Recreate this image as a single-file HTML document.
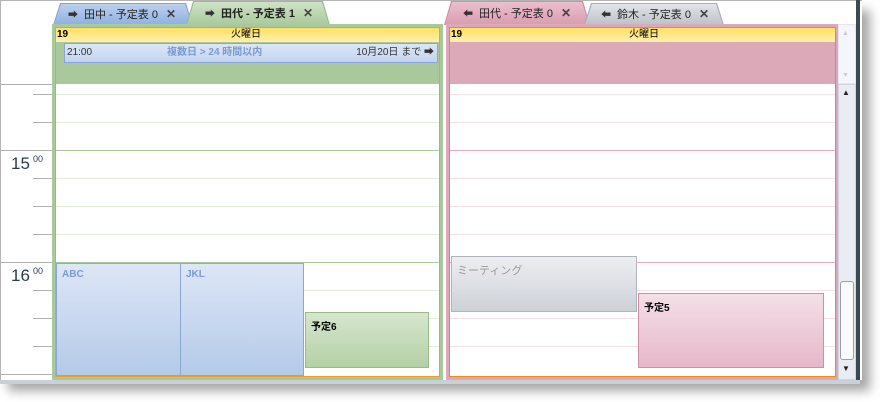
<!DOCTYPE html>
<html><head><meta charset="utf-8"><style>
*{box-sizing:border-box;margin:0;padding:0}
body{width:880px;height:402px;background:#fff;position:relative;overflow:hidden;font-family:"Liberation Sans","Noto Sans CJK JP",sans-serif;font-size:11px}
.a{position:absolute}
.tabo{position:absolute;clip-path:polygon(0 100%,7px 0,calc(100% - 7px) 0,100% 100%)}
.tab{position:absolute;left:1px;top:1px;right:1px;bottom:0;clip-path:polygon(0 100%,7px 0,calc(100% - 7px) 0,100% 100%);font-size:11px;line-height:20px;padding-left:14px;color:#222;white-space:nowrap}
.x{font-weight:bold;color:#444;margin-left:8px;font-size:12px}
.ar{font-size:10px;color:#333;margin-right:6px}
.ln{position:absolute;height:1px}
.ev{position:absolute;font-size:10px;font-weight:bold;padding:5px 0 0 5px}
</style></head><body>
<!-- window frame -->
<div class="a" style="left:0;top:0;width:862px;height:381px;border:1px solid #b4b4b4;border-right:none;box-shadow:8px 10px 10px rgba(0,0,0,.35)"></div>
<div class="a" style="left:856px;top:0;width:4px;height:381px;background:#3b4a52"></div>
<div class="a" style="left:0;top:380px;width:860px;height:4px;background:#c8d0d8"></div>
<!-- ruler -->
<div class="a" style="left:1px;top:84px;width:51px;height:1px;background:#b0b0b0"></div>
<div class="a" style="left:1px;top:150px;width:51px;height:1px;background:#b0b0b0"></div>
<div class="a" style="left:1px;top:262px;width:51px;height:1px;background:#b0b0b0"></div>
<div class="a" style="left:1px;top:374px;width:51px;height:1px;background:#b0b0b0"></div>
<div class="a" style="left:33px;top:94px;width:19px;height:1px;background:#b0b0b0"></div>
<div class="a" style="left:33px;top:122px;width:19px;height:1px;background:#b0b0b0"></div>
<div class="a" style="left:33px;top:178px;width:19px;height:1px;background:#b0b0b0"></div>
<div class="a" style="left:33px;top:206px;width:19px;height:1px;background:#b0b0b0"></div>
<div class="a" style="left:33px;top:234px;width:19px;height:1px;background:#b0b0b0"></div>
<div class="a" style="left:33px;top:290px;width:19px;height:1px;background:#b0b0b0"></div>
<div class="a" style="left:33px;top:318px;width:19px;height:1px;background:#b0b0b0"></div>
<div class="a" style="left:33px;top:346px;width:19px;height:1px;background:#b0b0b0"></div>
<div class="a" style="left:11px;top:154px;font-size:17px;color:#2b3a55">15</div>
<div class="a" style="left:33px;top:154px;font-size:9px;color:#2b3a55">00</div>
<div class="a" style="left:11px;top:266px;font-size:17px;color:#2b3a55">16</div>
<div class="a" style="left:33px;top:266px;font-size:9px;color:#2b3a55">00</div>
<!-- tabs -->
<div class="tabo" style="left:53px;top:3px;width:140px;height:22px;background:#8aa6d4"><div class="tab" style="background:linear-gradient(#bcd0ee,#8fb0e0)"><span class="ar">➡</span>田中 - 予定表 0<span class="x">✕</span></div></div>
<div class="tabo" style="left:186px;top:1px;width:144px;height:24px;background:#98bb8a"><div class="tab" style="line-height:22px;background:linear-gradient(#cfe3c6,#a9c99c);font-weight:bold;padding-left:18px"><span class="ar">➡</span>田代 - 予定表 1<span class="x">✕</span></div></div>
<div class="tabo" style="left:444px;top:1px;width:146px;height:24px;background:#d08da4"><div class="tab" style="line-height:22px;background:linear-gradient(#ecc0ce,#d99bb0);padding-left:18px"><span class="ar">⬅</span>田代 - 予定表 0<span class="x">✕</span></div></div>
<div class="tabo" style="left:584px;top:3px;width:140px;height:22px;background:#a9aeb7"><div class="tab" style="background:linear-gradient(#e2e5ea,#bcc1c9);padding-left:16px"><span class="ar">⬅</span>鈴木 - 予定表 0<span class="x">✕</span></div></div>
<!-- green panel -->
<div class="a" style="left:52px;top:24px;width:391px;height:356px;background:#a9c99c"></div>
<div class="a" style="left:55px;top:27px;width:385px;height:350px;border:1px solid #f0a020;background:#fff"></div>
<div class="a" style="left:56px;top:28px;width:383px;height:56px;background:#a9c99c"></div>
<div class="a" style="left:56px;top:28px;width:383px;height:14px;background:linear-gradient(#ffe060,#fff0b0);font-size:10px;line-height:14px"><b style="position:absolute;left:1px">19</b><span style="position:absolute;left:175px">火曜日</span></div>
<div class="a" style="left:64px;top:43px;width:374px;height:20px;background:linear-gradient(#dde6f6,#c2d3ef);border:1px solid #8aa6d4;font-size:10px;line-height:18px;color:#333"><span style="position:absolute;left:2px">21:00</span><span style="position:absolute;left:102px;color:#7c9bd0;font-weight:bold">複数日 &gt; 24 時間以内</span><span style="position:absolute;right:3px">10月20日 まで ➡</span></div>
<!-- green lines -->
<div class="ln" style="left:56px;top:94px;width:383px;background:#e2ead8"></div>
<div class="ln" style="left:56px;top:122px;width:383px;background:#e2ead8"></div>
<div class="ln" style="left:56px;top:150px;width:383px;background:#a9c99c"></div>
<div class="ln" style="left:56px;top:178px;width:383px;background:#e2ead8"></div>
<div class="ln" style="left:56px;top:206px;width:383px;background:#e2ead8"></div>
<div class="ln" style="left:56px;top:234px;width:383px;background:#e2ead8"></div>
<div class="ln" style="left:56px;top:262px;width:383px;background:#a9c99c"></div>
<div class="ln" style="left:56px;top:290px;width:383px;background:#e2ead8"></div>
<div class="ln" style="left:56px;top:318px;width:383px;background:#e2ead8"></div>
<div class="ln" style="left:56px;top:346px;width:383px;background:#e2ead8"></div>
<div class="ev" style="left:56px;top:263px;width:125px;height:113px;background:linear-gradient(#dde6f6,#b4cae8);border:1px solid #8aa6d4;color:#7c9bd0">ABC</div>
<div class="ev" style="left:180px;top:263px;width:124px;height:113px;background:linear-gradient(#dde6f6,#b4cae8);border:1px solid #8aa6d4;color:#7c9bd0">JKL</div>
<div class="ev" style="left:305px;top:312px;width:124px;height:56px;background:linear-gradient(#d6e6cd,#b4d0a6);border:1px solid #98bb8a;color:#000">予定6</div>
<!-- pink panel -->
<div class="a" style="left:446px;top:24px;width:392px;height:356px;background:#dba9b8"></div>
<div class="a" style="left:449px;top:27px;width:387px;height:350px;border:1px solid #f08a10;background:#fff"></div>
<div class="a" style="left:450px;top:28px;width:385px;height:56px;background:#dba9b8"></div>
<div class="a" style="left:450px;top:28px;width:385px;height:14px;background:linear-gradient(#ffe060,#fff0b0);font-size:10px;line-height:14px"><b style="position:absolute;left:1px">19</b><span style="position:absolute;left:179px">火曜日</span></div>
<div class="ln" style="left:450px;top:94px;width:385px;background:#f3e0e6"></div>
<div class="ln" style="left:450px;top:122px;width:385px;background:#f3e0e6"></div>
<div class="ln" style="left:450px;top:150px;width:385px;background:#e3a9bb"></div>
<div class="ln" style="left:450px;top:178px;width:385px;background:#f3e0e6"></div>
<div class="ln" style="left:450px;top:206px;width:385px;background:#f3e0e6"></div>
<div class="ln" style="left:450px;top:234px;width:385px;background:#f3e0e6"></div>
<div class="ln" style="left:450px;top:262px;width:385px;background:#e3a9bb"></div>
<div class="ln" style="left:450px;top:290px;width:385px;background:#f3e0e6"></div>
<div class="ln" style="left:450px;top:318px;width:385px;background:#f3e0e6"></div>
<div class="ln" style="left:450px;top:346px;width:385px;background:#f3e0e6"></div>
<div class="ev" style="left:451px;top:256px;width:186px;height:56px;background:linear-gradient(#eeeef2,#cdd2d8);border:1px solid #b0b4bc;color:#999;font-weight:normal;font-size:11px">ミーティング</div>
<div class="ev" style="left:638px;top:293px;width:186px;height:75px;background:linear-gradient(#f4dfe7,#e6b8c9);border:1px solid #d08da4;color:#000">予定5</div>
<!-- scrollbar -->
<div class="a" style="left:838px;top:24px;width:18px;height:60px;background:#f4f6fb;border:1px solid #e3e6ee"></div>
<div class="a" style="left:842px;top:30px;font-size:7px;color:#ccc">▲</div>
<div class="a" style="left:842px;top:72px;font-size:7px;color:#ccc">▼</div>
<div class="a" style="left:838px;top:84px;width:18px;height:296px;background:#e9ecf3;border:1px solid #d0d5de"></div>
<div class="a" style="left:842px;top:88px;font-size:8px;color:#222">▲</div>
<div class="a" style="left:840px;top:281px;width:14px;height:79px;background:#fafbfd;border:1px solid #9aa0aa;border-radius:3px"></div>
<div class="a" style="left:842px;top:364px;font-size:8px;color:#222">▼</div>
</body></html>
